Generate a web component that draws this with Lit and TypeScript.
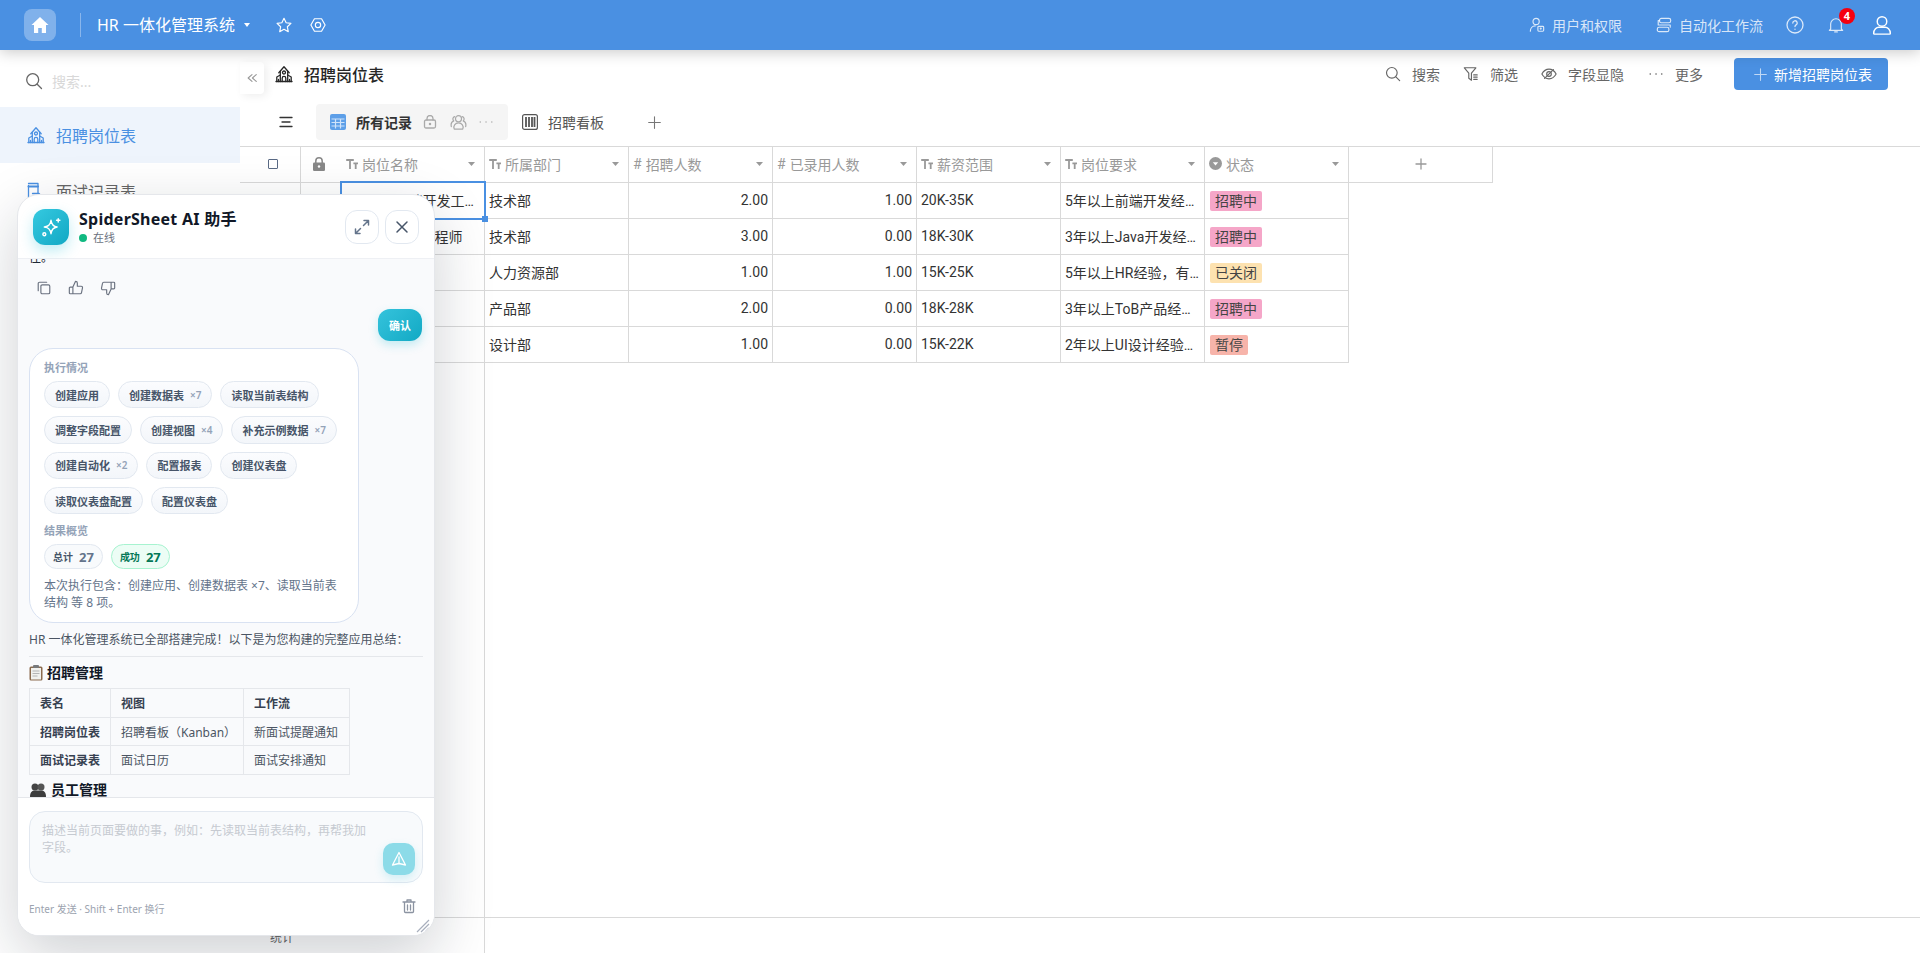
import { LitElement, html, css, svg } from "lit";
import { customElement } from "lit/decorators.js";

const ic = (size: number, body: unknown, vb = 18, cls = "") =>
  html`<svg class="ic ${cls}" width=${size} height=${size} viewBox="0 0 ${vb} ${vb}" fill="none" stroke="currentColor" stroke-width="1.3" stroke-linecap="round" stroke-linejoin="round">${body}</svg>`;

const temple = svg`<path d="M3.800 7.800 9 1.800l5.200 6"/><path d="M5.300 6.500v10M12.700 6.500v10"/><path d="M5.300 10 1.800 12v4.500M12.700 10l3.500 2v4.500"/><path d="M1 16.500h16"/><circle cx="9" cy="7.500" r="1.500"/><path d="M7.200 16.500V13.200a1.800 1.800 0 0 1 3.600 0v3.300"/><path d="M3.500 16.500v-2M14.500 16.500v-2"/>`;
const search = svg`<circle cx="7.700" cy="7.700" r="6"/><path d="m12.200 12.200 4.300 4.300"/>`;
const plus = svg`<path d="M9 2v14M2 9h14"/>`;
const tT = html`<svg class="tt" width="12" height="10" viewBox="0 0 12 10" fill="none" stroke="currentColor" stroke-width="1.800"><path d="M.2 1h7.600M4 1v9M7.400 4.400H12M9.700 4.400V10"/></svg>`;
const caret = html`<svg class="caret" width="7" height="4" viewBox="0 0 7 4"><path d="M0 0h7L3.500 4Z" fill="#999"/></svg>`;
const statusIc = html`<svg class="tt" width="13" height="13" viewBox="0 0 13 13"><circle cx="6.500" cy="6.500" r="6.500" fill="#999"/><path d="M3.800 5.200h5.400L6.500 8.400Z" fill="#fff"/></svg>`;

interface Head { t: string; k: "text" | "num" | "status" }
const heads: Head[] = [
  { t: "所属部门", k: "text" },
  { t: "招聘人数", k: "num" },
  { t: "已录用人数", k: "num" },
  { t: "薪资范围", k: "text" },
  { t: "岗位要求", k: "text" },
  { t: "状态", k: "status" },
];
const rows = [
  ["高级 前端开发工程师", "技术部", "2.00", "1.00", "20K-35K", "5年以上前端开发经验，熟悉主流框架", "招聘中", "pink"],
  ["Java开发工程师", "技术部", "3.00", "0.00", "18K-30K", "3年以上Java开发经验，熟悉微服务", "招聘中", "pink"],
  ["HR经理", "人力资源部", "1.00", "1.00", "15K-25K", "5年以上HR经验，有团队管理经验", "已关闭", "yellow"],
  ["产品经理", "产品部", "2.00", "0.00", "18K-28K", "3年以上ToB产品经验，善于沟通协作", "招聘中", "pink"],
  ["UI设计师", "设计部", "1.00", "0.00", "15K-22K", "2年以上UI设计经验，熟悉设计工具", "暂停", "red"],
];
const chips: [string, string?][][] = [
  [["创建应用"], ["创建数据表", "×7"], ["读取当前表结构"]],
  [["调整字段配置"], ["创建视图", "×4"], ["补充示例数据", "×7"]],
  [["创建自动化", "×2"], ["配置报表"], ["创建仪表盘"]],
  [["读取仪表盘配置"], ["配置仪表盘"]],
];

@customElement("app-root")
export class AppRoot extends LitElement {
  static styles = css`
    :host { display: block; height: 100vh; overflow: hidden; position: relative; background: #fff; color: #333;
      font-family: "Noto Sans", "Noto Sans CJK SC", sans-serif; font-size: 14px; }
    * { box-sizing: border-box; }
    svg { display: block; flex: none; }
    .page { display: flex; flex-direction: column; height: 100%; }

    .topbar { height: 50px; flex: none; background: #4a90e2; display: flex; align-items: center; padding: 0 28px 0 24px;
      box-shadow: 0 2px 14px rgba(0,0,0,.22); position: relative; z-index: 2; color: #fff; }
    .homebox { width: 32px; height: 32px; border-radius: 8px; background: rgba(255,255,255,.3); display: flex; align-items: center; justify-content: center; }
    .vsep { width: 1px; height: 24px; background: rgba(255,255,255,.35); margin: 0 16px 0 24px; }
    .apptitle { font-size: 16px; line-height: 22px; white-space: nowrap; width: 137px; }
    .dn { margin: 0 26px 0 10px; }
    .hex { margin-left: 18px; }
    .tbright { margin-left: auto; display: flex; align-items: center; color: rgba(255,255,255,.8); }
    .tbitem { display: flex; align-items: center; gap: 7px; font-size: 14px; white-space: nowrap; }
    .tbitem + .tbitem { margin-left: 34px; }
    .help { margin-left: 23px; }
    .bell { margin-left: 24px; position: relative; }
    .badge { position: absolute; left: 11px; top: -9px; width: 16px; height: 16px; border-radius: 50%; background: #f5000f; color: #fff; font-size: 11px; font-weight: 700; line-height: 16px; text-align: center; }
    .usr { margin-left: 28px; color: #fff; }

    .body { flex: 1; display: flex; min-height: 0; position: relative; }
    .side { width: 240px; flex: none; background: #fff; display: flex; flex-direction: column; position: relative; }
    .sideSearch { height: 57px; flex: none; display: flex; align-items: center; gap: 9px; padding: 4px 0 0 25px; color: #666; }
    .sideSearch span { color: #d8d8d8; font-size: 14px; }
    .navitem { height: 56px; flex: none; display: flex; align-items: center; gap: 11px; padding-left: 27px; font-size: 16px; color: #666; }
    .navitem.on { background: #eef4fc; color: #4a90e2; }
    .navitem svg { color: #4a90e2; }
    .collapse { position: absolute; left: 240px; top: 12px; width: 24px; height: 32px; background: #fff; border-radius: 0 4px 4px 0; display: flex; align-items: center; justify-content: center; color: #999; box-shadow: 3px 2px 8px rgba(0,0,0,.07); z-index: 1; }

    .main { flex: 1; min-width: 0; display: flex; flex-direction: column; }
    .titlebar { height: 50px; flex: none; display: flex; align-items: center; padding: 0 32px 2px 35px; }
    .pagetitle { display: flex; align-items: center; gap: 11px; font-size: 16px; font-weight: 500; color: #262626; }
    .tools { margin-left: auto; display: flex; align-items: center; color: #666; }
    .tool { display: flex; align-items: center; gap: 11px; margin-right: 24px; white-space: nowrap; font-size: 14px; }
    .tool.s1 { margin-right: 23px; }
    .tool.s2 { margin-right: 23px; }
    .tool.last { margin-right: 31px; }
    .addbtn { height: 32px; width: 154px; border-radius: 4px; background: #4a90e2; color: #fff; display: flex; align-items: center; gap: 6px; padding-left: 19px; font-size: 14px; white-space: nowrap; }
    .addbtn svg { color: rgba(255,255,255,.65); }

    .tabs { height: 46px; flex: none; display: flex; align-items: center; padding: 0 0 2px 39px; color: #555; }
    .menu { color: #333; margin-right: 23px; }
    .tab { height: 36px; display: flex; align-items: center; padding: 0 14px; border-radius: 4px; white-space: nowrap; }
    .tab.on { background: #f5f5f5; color: #333; font-weight: 600; }
    .tab.on .tabname { margin: 0 11px 0 10px; }
    .tab .tabname { margin-left: 10px; }
    .muted { color: #aaa; }
    .gap13 { margin: 0 11px 0 13px; }
    .tabplus { margin-left: 29px; color: #777; }

    .sheet { flex: 1; min-height: 0; display: flex; border-top: 1px solid #d9d9d9; }
    .frozen { width: 245px; flex: none; border-right: 1px solid #d9d9d9; display: grid; grid-template-columns: 61px 40px 143px; grid-auto-rows: 36px; align-content: start; }
    .cols { display: grid; grid-template-columns: repeat(7, 144px); grid-auto-rows: 36px; align-content: start; }
    .cell { border-bottom: 1px solid #d9d9d9; border-right: 1px solid #d9d9d9; padding: 0 4px 2px; display: flex; align-items: center; min-width: 0; color: #333; font-family: Roboto, "Noto Sans CJK SC", sans-serif; font-size: 14px; white-space: nowrap; }
    .frozen .cell.n { border-right: 0; position: relative; padding-left: 22px; }
    .frozen .cell.lk { border-right: 0; }
    .cell.hd { color: #999; gap: 4px; }
    .frozen .cell.hd.n { padding-left: 5px; }
    .cell .lbl { flex: 1; overflow: hidden; }
    .caret { margin-right: 5px; }
    .num { justify-content: flex-end; }
    .trunc { display: block; overflow: hidden; text-overflow: ellipsis; width: 100%; }
    .center { justify-content: center; }
    .boxcell { padding-left: 9px; }
    .lockcell { padding-right: 9px; }
    .hash { font-size: 14px; color: #999; }
    .tag { height: 20px; line-height: 20px; padding: 0 5px; border-radius: 2px; margin: 2px 0 0 1px; color: #444; }
    .tag.pink { background: #f5a6c8; }
    .tag.yellow { background: #fde2b0; }
    .tag.red { background: #f7b4aa; }
    .box { width: 10px; height: 10px; border: 1.500px solid #5a6a85; border-radius: 1px; }
    .sel { position: absolute; left: -1px; top: -2px; right: -2px; bottom: -2px; border: 2px solid #4a90e2; z-index: 1; pointer-events: none; }
    .sel i { position: absolute; right: -4px; bottom: -4px; width: 6px; height: 6px; background: #4a90e2; }
    .statrow { display: flex; height: 36px; flex: none; border-top: 1px solid #d9d9d9; }
    .statleft { width: 245px; border-right: 1px solid #d9d9d9; font-size: 12px; color: #666; padding: 12px 0 0 30px; line-height: 16px; }

    .panel { position: absolute; left: 17px; top: 194px; width: 418px; height: 742px; background: #fff; border: 1px solid #e5e7eb; border-radius: 22px; display: flex; flex-direction: column; overflow: hidden; z-index: 3; box-shadow: 0 20px 60px rgba(15,23,42,.2); }
    .phead { height: 64px; flex: none; display: flex; align-items: center; padding: 0 15px 0 15px; border-bottom: 1px solid #eef0f4; }
    .logo { width: 36px; height: 36px; border-radius: 12px; background: linear-gradient(135deg, #35c9e0, #12a8c4); display: flex; align-items: center; justify-content: center; color: #fff; box-shadow: 0 6px 14px rgba(34,190,215,.28); }
    .pinfo { margin-left: 10px; flex: 1; }
    .pname { font-size: 16px; font-weight: 700; color: #111827; line-height: 22px; letter-spacing: .25px; }
    .pstatus { display: flex; align-items: center; gap: 6px; font-size: 11px; color: #6b7280; line-height: 16px; }
    .dot { width: 8px; height: 8px; border-radius: 50%; background: #10b981; }
    .pbtn { width: 34px; height: 34px; border: 1px solid #e2e8f0; border-radius: 12px; display: flex; align-items: center; justify-content: center; color: #64748b; background: #fff; margin-left: 6px; }
    .pbtn.x { color: #475569; }

    .msgs { flex: 1; min-height: 0; overflow: hidden; background: #f9fafc; padding: 0 11px; }
    .scroller { margin-top: -10px; display: flex; flex-direction: column; }
    .clip { font-size: 12px; line-height: 17px; color: #1f2937; }
    .acts { display: flex; gap: 16px; padding-left: 7px; margin-top: 14px; color: #6b7280; }
    .bubble { align-self: flex-end; margin: 13px 1px 0 0; width: 44px; height: 32px; border-radius: 12px; background: linear-gradient(135deg, #35c3dc, #12a9c4); color: #fff; font-size: 11px; font-weight: 700; display: flex; align-items: center; justify-content: center; box-shadow: 0 4px 10px rgba(34,190,215,.25); }
    .card { width: 330px; margin-top: 7px; background: #fff; border: 1px solid #d9e2f2; border-radius: 24px; padding: 12px 14px 11px; }
    .clabel { font-size: 11px; line-height: 14px; font-weight: 600; color: #94a3b8; }
    .chiprows { display: flex; flex-direction: column; gap: 8px; margin-top: 6px; }
    .chiprow { display: flex; gap: 8px; }
    .chip { height: 27.300px; padding: 0 10px; border: 1px solid #e2e8f0; border-radius: 14px; background: linear-gradient(180deg, #fbfcfe, #f3f6fa); font-size: 11px; font-weight: 600; color: #475569; display: flex; align-items: center; white-space: nowrap; }
    .chip em { font-style: normal; margin-left: 6px; font-size: 10px; color: #94a3b8; }
    .clabel.second { margin-top: 10px; }
    .pills { display: flex; gap: 8px; margin-top: 6px; }
    .pill { height: 25px; padding: 0 8px; border: 1px solid #e2e8f0; border-radius: 13px; background: #f8fafc; display: flex; align-items: center; gap: 6px; font-size: 10px; font-weight: 600; color: #475569; }
    .pill b { font-size: 13px; font-weight: 700; color: #64748b; }
    .pill.ok { background: #ecfdf5; border-color: #a7f3d0; color: #047857; }
    .pill.ok b { color: #047857; }
    .desc { margin-top: 8px; font-size: 12px; line-height: 17px; color: #64748b; }
    .intro { font-size: 12px; line-height: 17px; margin-top: 8px; color: #4b5563; white-space: nowrap; }
    .hr { height: 1px; background: #e5e7eb; margin-top: 8px; }
    .h3 { display: flex; align-items: center; gap: 4px; font-size: 14px; font-weight: 700; line-height: 20px; color: #111827; margin: 6px 0 5px; }
    table { border-collapse: collapse; width: 320px; table-layout: fixed; font-size: 12px; color: #4b5563; }
    th, td { border: 1px solid #e5e7eb; padding: 0 10px; height: 28.600px; text-align: left; font-weight: 400; white-space: nowrap; }
    th { font-weight: 700; color: #374151; }
    .w1 { width: 81px; } .w2 { width: 133px; } .w3 { width: 106px; }
    .h3.b { gap: 5px; margin: 5px 0 0 1px; font-size: 14px; }

    .pfoot { height: 138px; flex: none; background: #fff; border-top: 1px solid #e5e7eb; padding: 13px 11px 0; position: relative; display: flex; flex-direction: column; }
    .inputbox { height: 72px; flex: none; border: 1px solid #e2e8f0; border-radius: 16px; background: #f8fafc; padding: 10px 12px; font-size: 12px; line-height: 17px; color: #c6cad1; position: relative; }
    .inputbox p { margin: 0; width: 330px; }
    .send { position: absolute; right: 7px; bottom: 7px; width: 32px; height: 32px; border-radius: 10px; background: #8cdbe8; display: flex; align-items: center; justify-content: center; color: #fff; box-shadow: 0 4px 10px rgba(34,190,215,.18); }
    .hint { display: flex; align-items: center; justify-content: space-between; margin-top: 18px; padding-right: 6px; font-size: 10px; line-height: 16px; color: #9ca3af; }
    .hint svg { margin-top: -6px; color: #8b93a1; }
    .grip { position: absolute; right: 4px; bottom: 2px; color: #a8afbd; }
  `;

  private head(h: Head) {
    return html`<div class="cell hd">
      ${h.k === "text" ? tT : h.k === "num" ? html`<span class="hash">#</span>` : statusIc}
      <span class="lbl">${h.t}</span>${caret}
    </div>`;
  }

  private row(r: string[]) {
    return html`
      <div class="cell"><span>${r[1]}</span></div>
      <div class="cell num">${r[2]}</div>
      <div class="cell num">${r[3]}</div>
      <div class="cell">${r[4]}</div>
      <div class="cell"><span class="trunc">${r[5]}</span></div>
      <div class="cell"><span class="tag ${r[7]}">${r[6]}</span></div>
      <div></div>`;
  }

  private sidebar() {
    return html`<aside class="side">
      <div class="sideSearch">${ic(18, search)}<span>搜索...</span></div>
      <div class="navitem on">${ic(18, temple)}招聘岗位表</div>
      <div class="navitem">${ic(18, svg`<path d="M1.500 3.500V17M1.500 1.500h9.500v9.500"/><path d="M1.500 4.500H11" stroke-width="2"/><path d="M5.500 11.500h6.500l3 3.500H5"/>`)}面试记录表</div>
      <div class="collapse">${ic(12, svg`<path d="M7 3 2.500 7 7 11M12 3 7.500 7 12 11"/>`, 14)}</div>
    </aside>`;
  }

  private topbar() {
    return html`<header class="topbar">
      <div class="homebox"><svg width="20" height="20" viewBox="0 0 20 20"><path d="M10 2 1.500 10H4v8h4.200v-5h3.600v5H16v-8h2.500L10 2Z" fill="#fff"/></svg></div>
      <div class="vsep"></div>
      <div class="apptitle">HR 一体化管理系统</div>
      <svg class="dn" width="6" height="4" viewBox="0 0 6 4"><path d="M0 0h6L3 4Z" fill="#fff"/></svg>
      ${ic(16, svg`<path d="m9 1.500 2.400 5 5.400.7-4 3.800 1 5.500L9 13.800l-4.800 2.700 1-5.500-4-3.800 5.400-.7L9 1.500Z"/>`, 18)}
      <span class="hex">${ic(16, svg`<path d="M5 2h8l4 7-4 7H5L1 9l4-7Z"/><circle cx="9" cy="9" r="3"/>`, 18)}</span>
      <div class="tbright">
        <div class="tbitem">${ic(16, svg`<circle cx="8" cy="5" r="3.500"/><path d="M1.500 16c0-3.500 2.500-6 5.500-6"/><rect x="10" y="10.500" width="6.500" height="5.500" rx="1"/><circle cx="13.200" cy="13" r=".6"/>`)}用户和权限</div>
        <div class="tbitem">${ic(16, svg`<rect x="4" y="1.500" width="12.500" height="5" rx="2"/><rect x="1.500" y="11.500" width="13" height="5" rx="2"/><path d="M4 4H2.500v5H16v2.500"/>`)}<span>自动化工作流</span></div>
        <span class="help">${ic(18, svg`<circle cx="9" cy="9" r="8"/><path d="M6.800 7a2.200 2.200 0 1 1 3.300 1.900c-.7.4-1.100.9-1.100 1.700"/><path d="M9 13.200v.1"/>`)}</span>
        <span class="bell">${ic(16, svg`<path d="M3 13.500V8a6 6 0 0 1 12 0v5.500l1.500 1.500h-15L3 13.500Z"/><path d="M7.500 16.800h3"/>`)}<span class="badge">4</span></span>
        <span class="usr">${ic(20, svg`<circle cx="9" cy="5.800" r="4.300"/><path d="M1.500 16.600c0-3.600 2.800-5.600 4.500-5.600h6c1.700 0 4.500 2 4.500 5.600 0 .4-.4.6-.7.6H2.200c-.3 0-.7-.2-.7-.6Z"/>`)}</span>
      </div>
    </header>`;
  }

  private titlebar() {
    return html`<div class="titlebar">
      <div class="pagetitle">${ic(18, temple)}招聘岗位表</div>
      <div class="tools">
        <div class="tool s1">${ic(16, search)}搜索</div>
        <div class="tool s2">${ic(16, svg`<path d="M1.500 2h13l-5 6v8l-3-2.200V8L1.500 2Z"/><path d="M12 10h4M12 12.500h4M12 15h4"/>`)}筛选</div>
        <div class="tool">${ic(16, svg`<path d="M1 9c2-3.600 5-5.400 8-5.400s6 1.800 8 5.400c-2 3.600-5 5.400-8 5.400S3 12.600 1 9Z"/><circle cx="9" cy="9" r="2.600"/><path d="M14 4 4 14"/>`)}字段显隐</div>
        <div class="tool last">${ic(16, svg`<path d="M2.500 9h.1M9 9h.1M15.400 9h.1" stroke-width="1.800"/>`)}更多</div>
        <div class="addbtn">${ic(15, plus)}新增招聘岗位表</div>
      </div>
    </div>`;
  }

  private tabs() {
    return html`<div class="tabs">
      <span class="menu">${ic(14, svg`<path d="M1 2.500h12M3 7h8M1 11.500h12"/>`, 14)}</span>
      <div class="tab on">
        <svg width="16" height="16" viewBox="0 0 16 16"><rect width="16" height="16" rx="2" fill="#5d9fe8"/><path d="M1.500 5h13M1.500 8.500h13M1.500 12h13M5.500 5v9.500M10.500 5v9.500" stroke="#cfe3fa" stroke-width="1.200"/></svg>
        <span class="tabname">所有记录</span>
        <span class="muted">${ic(14, svg`<rect x="1.500" y="5" width="11" height="8" rx="1.500"/><path d="M4 5V3.500a3 3 0 0 1 6 0V5"/><circle cx="7" cy="9" r=".6"/>`, 14)}</span>
        <span class="muted gap13">${ic(17, svg`<circle cx="9" cy="5" r="3.200"/><path d="M4.500 16c-1.500-3.500 1-6.500 4.500-6.500s6 3 4.500 6.500h-9Z"/><path d="M5 2.800a2.600 2.600 0 0 0-1 4.500c-2 .8-3.300 3-2.600 6M13 2.800a2.600 2.600 0 0 1 1 4.500c2 .8 3.300 3 2.600 6"/>`)}</span>
        <span class="muted">${ic(16, svg`<path d="M2.500 9h.1M9 9h.1M15.500 9h.1" stroke-width="1.500"/>`)}</span>
      </div>
      <div class="tab">
        <svg width="16" height="16" viewBox="0 0 16 16"><rect x=".6" y=".6" width="14.800" height="14.800" rx="2" fill="none" stroke="#555" stroke-width="1.200"/><path d="M4 3v10M7 3v10M10 3v10M12.500 3v10" stroke="#555" stroke-width="1.800"/></svg>
        <span class="tabname">招聘看板</span>
      </div>
      <span class="tabplus">${ic(15, plus)}</span>
    </div>`;
  }

  private sheet() {
    return html`<div class="sheet">
      <div class="frozen">
        <div class="cell center boxcell"><div class="box"></div></div>
        <div class="cell lk center hd lockcell"><svg width="12" height="14" viewBox="0 0 12 14"><path d="M2.800 6V4a3.200 3.200 0 0 1 6.400 0v2" fill="none" stroke="#888" stroke-width="1.500"/><rect y="5.500" width="12" height="8.500" rx="1.200" fill="#888"/><circle cx="6" cy="9.500" r="1.200" fill="#fff"/></svg></div>
        <div class="cell n hd">${tT}<span class="lbl">岗位名称</span>${caret}</div>
        ${rows.map((r, i) => html`
          <div class="cell"></div>
          <div class="cell lk"></div>
          <div class="cell n"><span class="trunc">${r[0]}</span>${i === 0 ? html`<div class="sel"><i></i></div>` : ""}</div>`)}
      </div>
      <div class="cols">
        ${heads.map((h) => this.head(h))}
        <div class="cell hd center">${ic(12, svg`<path d="M6 1v10M1 6h10"/>`, 12)}</div>
        ${rows.map((r) => this.row(r))}
      </div>
    </div>`;
  }

  private panel() {
    return html`<section class="panel">
      <div class="phead">
        <div class="logo">${ic(20, svg`<path d="M11 3c.6 4 2 5.500 5.500 6-3.500.5-5 2-5.500 6-.6-4-2-5.500-6-6 4-.5 5.400-2 6-6Z" transform="translate(-2 0)"/><path d="M15.500 1.500v3M14 3h3"/><circle cx="3" cy="15.500" r="1.300"/>`)}</div>
        <div class="pinfo">
          <div class="pname">SpiderSheet AI 助手</div>
          <div class="pstatus"><span class="dot"></span>在线</div>
        </div>
        <div class="pbtn">${ic(18, svg`<path d="M10.500 7.500 15.500 2.500M11 2.500h4.500V7M7.500 10.500l-5 5M2.500 11v4.500H7" stroke-width="1.500"/>`)}</div>
        <div class="pbtn x">${ic(14, svg`<path d="m2 2 10 10M12 2 2 12" stroke-width="1.500"/>`, 14)}</div>
      </div>
      <div class="msgs"><div class="scroller">
        <div class="clip">佳。</div>
        <div class="acts">
          ${ic(16, svg`<rect x="5.500" y="5.500" width="10" height="10" rx="1.500"/><path d="M12 2.500H4A1.500 1.500 0 0 0 2.500 4v8"/>`)}
          ${ic(16, svg`<path d="M5.500 8v7.500h-3a1 1 0 0 1-1-1V9a1 1 0 0 1 1-1h3Zm0 0 3-6.500c1.200 0 2 .8 2 2V7h4.300a1.500 1.500 0 0 1 1.500 1.800l-1.100 5.400a1.500 1.500 0 0 1-1.500 1.300H5.500"/>`)}
          ${ic(16, svg`<path d="M12.500 10V2.500h3a1 1 0 0 1 1 1V9a1 1 0 0 1-1 1h-3Zm0 0-3 6.500c-1.200 0-2-.8-2-2V11H3.200a1.500 1.500 0 0 1-1.500-1.800l1.100-5.400a1.500 1.500 0 0 1 1.500-1.300h8.200"/>`)}
        </div>
        <div class="bubble">确认</div>
        <div class="card">
          <div class="clabel">执行情况</div>
          <div class="chiprows">
            ${chips.map((row) => html`<div class="chiprow">${row.map((c) => html`<div class="chip">${c[0]}${c[1] ? html`<em>${c[1]}</em>` : ""}</div>`)}</div>`)}
          </div>
          <div class="clabel second">结果概览</div>
          <div class="pills">
            <div class="pill">总计 <b>27</b></div>
            <div class="pill ok">成功 <b>27</b></div>
          </div>
          <div class="desc">本次执行包含：创建应用、创建数据表 ×7、读取当前表结构 等 8 项。</div>
        </div>
        <div class="intro">HR 一体化管理系统已全部搭建完成！以下是为您构建的完整应用总结：</div>
        <div class="hr"></div>
        <div class="h3">
          <svg width="14" height="16" viewBox="0 0 14 16"><rect x=".5" y="1.500" width="13" height="14" rx="1.500" fill="#8b6b4e"/><rect x="2" y="3" width="10" height="11.500" fill="#f1f1ee"/><rect x="4" y="0" width="6" height="3" rx="1" fill="#77797c"/><path d="M3.500 6h7M3.500 8.500h7M3.500 11h5" stroke="#b5b5b5"/></svg>
          招聘管理
        </div>
        <table>
          <colgroup><col class="w1"/><col class="w2"/><col class="w3"/></colgroup>
          <tr><th>表名</th><th>视图</th><th>工作流</th></tr>
          <tr><th>招聘岗位表</th><td>招聘看板（Kanban）</td><td>新面试提醒通知</td></tr>
          <tr><th>面试记录表</th><td>面试日历</td><td>面试安排通知</td></tr>
        </table>
        <div class="h3 b">
          <svg width="16" height="14" viewBox="0 0 16 14"><circle cx="5" cy="4" r="3.500" fill="#444"/><circle cx="11" cy="4" r="3.500" fill="#555"/><path d="M0 14c0-5 2-6.500 5-6.500h6c3 0 5 1.500 5 6.500H0Z" fill="#3d3d3d"/></svg>
          员工管理
        </div>
      </div></div>
      <div class="pfoot">
        <div class="inputbox">
          <p>描述当前页面要做的事，例如：先读取当前表结构，再帮我加字段。</p>
          <div class="send">${ic(16, svg`<path d="M8 1.500 14.500 14 8 12.500 1.500 14 8 1.500Z"/><path d="M8 6v6.500"/>`, 16)}</div>
        </div>
        <div class="hint">
          <span>Enter 发送 · Shift + Enter 换行</span>
          ${ic(16, svg`<path d="M2 4h12M6 4V2h4v2M3.500 4v9.500a1 1 0 0 0 1 1h7a1 1 0 0 0 1-1V4M6.500 7v5M9.500 7v5"/>`, 16)}
        </div>
        <svg class="grip" width="14" height="14" viewBox="0 0 14 14" fill="none" stroke="currentColor" stroke-width="1.200"><path d="M1 13 13 1M5 13l8-8M9 13l4-4"/></svg>
      </div>
    </section>`;
  }

  render() {
    return html`<div class="page">
      ${this.topbar()}
      <div class="body">
        ${this.sidebar()}
        <main class="main">
          ${this.titlebar()}
          ${this.tabs()}
          ${this.sheet()}
          <div class="statrow"><div class="statleft">统计</div></div>
        </main>
      </div>
      ${this.panel()}
    </div>`;
  }
}
